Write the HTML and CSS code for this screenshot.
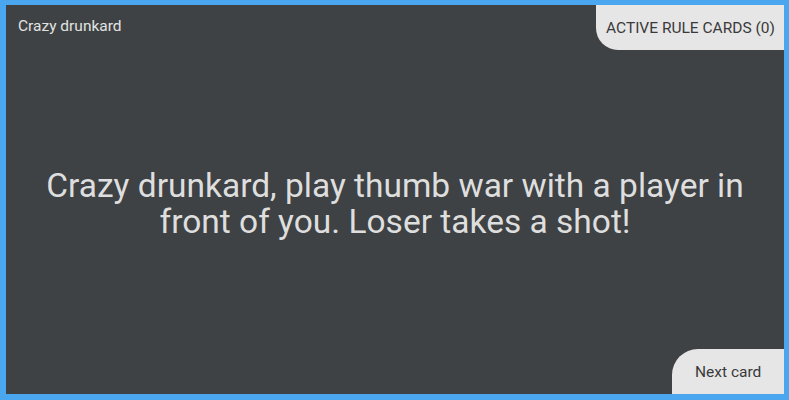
FILE: index.html
```html
<!DOCTYPE html>
<html>
<head>
<meta charset="utf-8">
<link rel="stylesheet" href="styles.css">
</head>
<body>
<div class="frame">
  <div class="screen">
    <div class="top">
      <div class="title">Crazy drunkard</div>
      <div class="rules-tab">ACTIVE RULE CARDS (0)</div>
    </div>
    <div class="card-text">Crazy drunkard, play thumb war with a player in front of you. Loser takes a shot!</div>
    <div class="bottom">
      <div class="next-btn">Next card</div>
    </div>
  </div>
</div>
</body>
</html>
```
FILE: styles.css
```css
html, body {
  margin: 0;
  padding: 0;
  width: 789px;
  height: 400px;
  overflow: hidden;
  background: #4aa6ef;
  font-family: Roboto, "Noto Sans", sans-serif;
}
.frame {
  box-sizing: border-box;
  width: 789px;
  height: 400px;
  padding: 5px 5px 6px 6px;
}
.screen {
  height: 100%;
  background: #3e4244;
  display: flex;
  flex-direction: column;
}
.top {
  display: flex;
  justify-content: space-between;
  align-items: flex-start;
  height: 45px;
}
.title {
  color: #e2e2e2;
  font-size: 15.5px;
  padding: 12px 0 0 12px;
}
.rules-tab {
  background: #e6e6e6;
  color: #3a3a3a;
  font-size: 15.5px;
  height: 45px;
  box-sizing: border-box;
  padding: 14px 0 0 10px;
  border-bottom-left-radius: 22px;
  width: 188px;
}
.card-text {
  flex: 1;
  display: flex;
  align-items: center;
  justify-content: center;
  text-align: center;
  color: #dedede;
  font-size: 33.5px;
  line-height: 36px;
  padding: 0 30px;
  margin-top: 8px;
}
.bottom {
  display: flex;
  justify-content: flex-end;
  height: 45px;
}
.next-btn {
  background: #e6e6e6;
  color: #3a3a3a;
  font-size: 15.5px;
  width: 112px;
  box-sizing: border-box;
  padding: 14px 0 0 23px;
  border-top-left-radius: 26px;
}
```
